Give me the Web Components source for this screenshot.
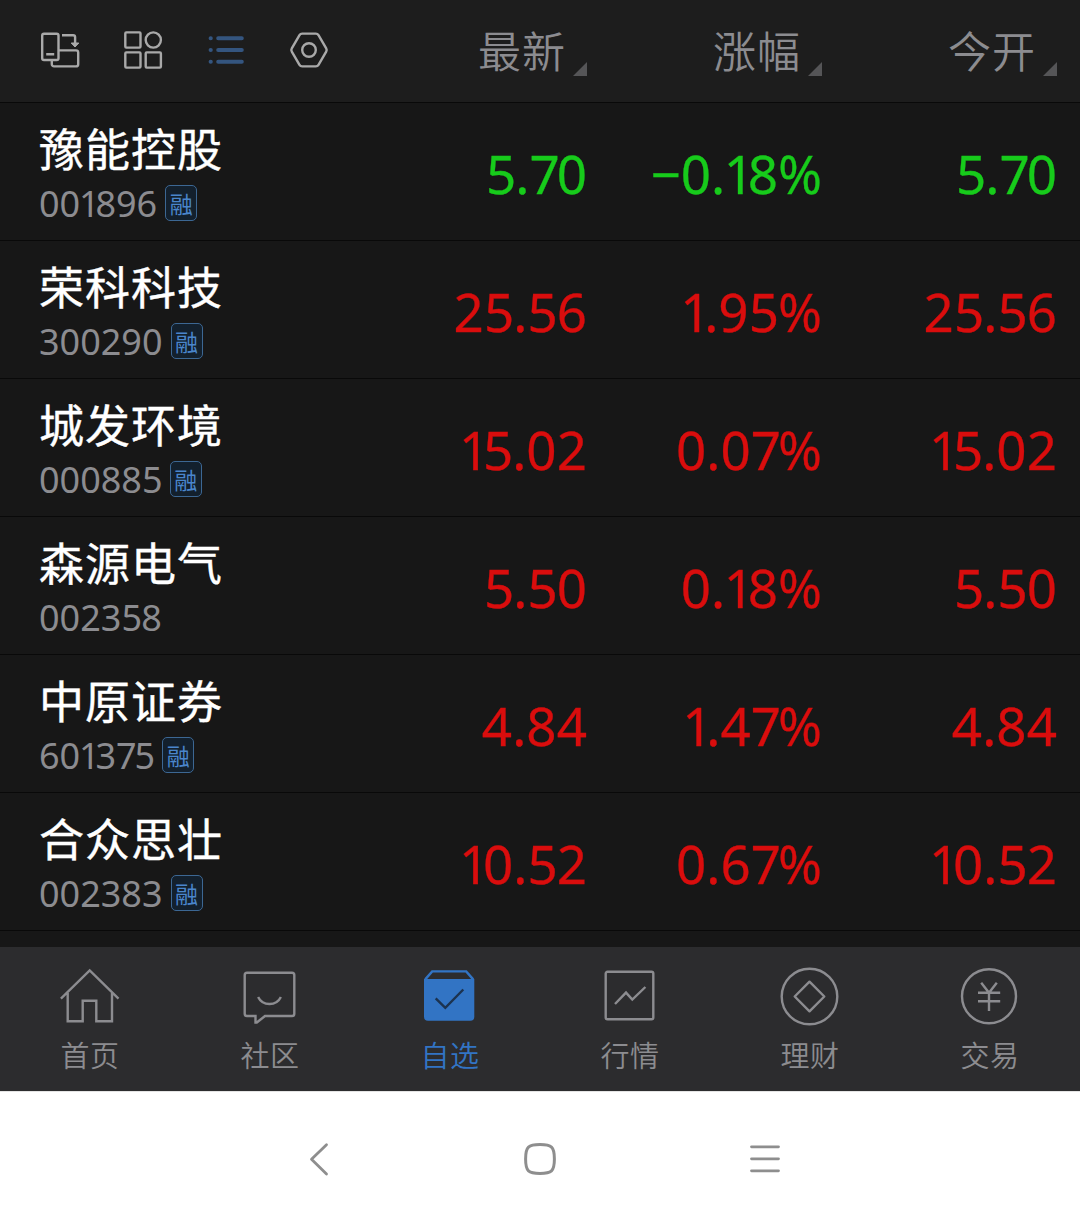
<!DOCTYPE html>
<html lang="zh-CN">
<head>
<meta charset="utf-8">
<title>自选</title>
<style>
    html, body {
        margin: 0;
        background: #171717;
    }

    body {
        width: 1080px;
        height: 1221px;
        overflow: hidden;
        font-family: "Noto Sans CJK SC", sans-serif;
        --font-num: "Noto Sans", "Noto Sans CJK SC", sans-serif;
        --color-up: #d90d0d;
        --color-down: #17cb1b;
        --color-muted: #8c8c90;
        --color-line: #090909;
        --color-accent: #3274c4;
        --columns: 387px 200px 235px 235px;
    }
</style>
</head>
<body>
<watch-app>
    <watch-header slot="header"></watch-header>
    <stock-row name="豫能控股" code="001896" margin price="5.70" change="−0.18%" open="5.70" trend="down"></stock-row>
    <stock-row name="荣科科技" code="300290" margin price="25.56" change="1.95%" open="25.56"></stock-row>
    <stock-row name="城发环境" code="000885" margin price="15.02" change="0.07%" open="15.02"></stock-row>
    <stock-row name="森源电气" code="002358" price="5.50" change="0.18%" open="5.50"></stock-row>
    <stock-row name="中原证券" code="601375" margin price="4.84" change="1.47%" open="4.84"></stock-row>
    <stock-row name="合众思壮" code="002383" margin price="10.52" change="0.67%" open="10.52"></stock-row>
    <nav-tab slot="tabs" icon="home">首页</nav-tab>
    <nav-tab slot="tabs" icon="chat">社区</nav-tab>
    <nav-tab slot="tabs" icon="pick" active>自选</nav-tab>
    <nav-tab slot="tabs" icon="chart">行情</nav-tab>
    <nav-tab slot="tabs" icon="coin">理财</nav-tab>
    <nav-tab slot="tabs" icon="yen">交易</nav-tab>
    <system-nav slot="system"></system-nav>
</watch-app>

<script>
const ICONS = {
    rotate: `
        <rect x="2.2" y="3.7" width="16.3" height="26.3" rx="1.8"/>
        <path d="M6.2 24.3h8M19 20.4h17a2.2 2.2 0 0 1 2.2 2.2v11.6a2.2 2.2 0 0 1-2.2 2.2H14a2.2 2.2 0 0 1-2.2-2.2V30M22 5.2h11.2a1.9 1.9 0 0 1 1.9 1.9V14"/>
        <path d="M31.2 13h7.6l-3.8 4z" fill="currentColor" stroke-width="1"/>`,
    grid: `
        <rect x="2.3" y="2.4" width="15.2" height="15.2" rx="1"/>
        <circle cx="30.3" cy="10" r="7.6"/>
        <rect x="2.3" y="22.4" width="15.2" height="15.2" rx="1"/>
        <rect x="22.7" y="22.4" width="15.2" height="15.2" rx="1"/>`,
    list: `
        <path d="M4.6 8.3h.2M4.6 20h.2M4.6 31.7h.2M12.2 8.3h23.6M12.2 20h23.6M12.2 31.7h23.6" stroke-width="4" stroke-linecap="round"/>`,
    settings: `
        <path d="M13.2 3.6h13.6a3.2 3.2 0 0 1 2.7 1.6l7.7 13.2a3.2 3.2 0 0 1 0 3.2l-7.7 13.2a3.2 3.2 0 0 1-2.7 1.6H13.2a3.2 3.2 0 0 1-2.7-1.6L2.8 21.6a3.2 3.2 0 0 1 0-3.2l7.7-13.2a3.2 3.2 0 0 1 2.7-1.6z"/>
        <circle cx="20" cy="20" r="6.8"/>`,
    home: `
        <path d="M.9 31.6 29.7 3.4l28.8 28.2M7.7 26v28.3h15V33.7h13.6v20.6H52V26"/>`,
    chat: `
        <path d="M7 5.7h45a2.3 2.3 0 0 1 2.3 2.3v38.7A2.3 2.3 0 0 1 52 49H25l-8.2 6.5H15.5V49H7a2.3 2.3 0 0 1-2.3-2.3V8A2.3 2.3 0 0 1 7 5.7z"/>
        <path d="M18.1 30c4.6 9.4 18.2 9.4 22.8 0"/>`,
    pick: `
        <path d="M4 12h50.3v37.7a4 4 0 0 1-4 4H8a4 4 0 0 1-4-4z" fill="currentColor" stroke="none"/>
        <path d="M5.2 12.4 12.2 4.4h34l7 8"/>
        <path d="M15.7 31.3 25.3 40.8 43.3 22.5" stroke="#1c3350"/>`,
    chart: `
        <rect x="5.7" y="4.7" width="47.6" height="47.6" rx="1.8"/>
        <path d="M15 37 26 25.6l6.3 7L45.4 20"/>`,
    coin: `
        <circle cx="29.5" cy="29.5" r="27.8"/>
        <path d="M29.5 14.7 44.3 29.5 29.5 44.3 14.7 29.5z" stroke-linejoin="round"/>`,
    yen: `
        <circle cx="29" cy="29.3" r="27"/>
        <path d="M21.2 15.8 29 25.8l7.8-10M29 25.8V44M18 25.8h22.2M18 34.2h22.2"/>`
};

function drawIcon(name, size) {
    return `<svg width="${size}" height="${size}" viewBox="0 0 ${size} ${size}" fill="none" stroke="currentColor" stroke-width="2.4">${ICONS[name]}</svg>`;
}

// Proportional spacing for the figures whose tabular width is too loose
function setDigits(text) {
    return text.replace(/[157]/g, (d) => `<span class="d${d}">${d}</span>`);
}

class WatchApp extends HTMLElement {
    constructor() {
        super();
        this.attachShadow({ mode: 'open' });
        this.shadowRoot.innerHTML = `
            <style>
                :host {
                    display: flex;
                    flex-direction: column;
                    height: 1221px;
                }

                .list {
                    flex: 1;
                    min-height: 0;
                    overflow: hidden;
                }

                .tabs {
                    display: grid;
                    grid-template-columns: repeat(6, 180px);
                    height: 144px;
                    background: #2c2c2e;
                }
            </style>
            <slot name="header"></slot>
            <div class="list"><slot></slot></div>
            <div class="tabs"><slot name="tabs"></slot></div>
            <slot name="system"></slot>
        `;
    }
}

class WatchHeader extends HTMLElement {
    constructor() {
        super();
        this.attachShadow({ mode: 'open' });
        this.shadowRoot.innerHTML = `
            <style>
                :host {
                    display: grid;
                    grid-template-columns: 392px 195px 235px 235px;
                    height: 102px;
                    background: #1d1d1d;
                    border-bottom: 1px solid var(--color-line);
                }

                .tools {
                    display: flex;
                    gap: 43px;
                    padding: 30px 0 0 40px;
                    color: #a9a9a9;
                }

                .tools svg {
                    display: block;
                }

                .selected {
                    color: #34557f;
                }
            </style>
            <div class="tools">
                <span>${drawIcon('rotate', 40)}</span>
                <span>${drawIcon('grid', 40)}</span>
                <span class="selected">${drawIcon('list', 40)}</span>
                <span>${drawIcon('settings', 40)}</span>
            </div>
            <sort-label>最新</sort-label>
            <sort-label>涨幅</sort-label>
            <sort-label>今开</sort-label>
        `;
    }
}

class SortLabel extends HTMLElement {
    constructor() {
        super();
        this.attachShadow({ mode: 'open' });
        this.shadowRoot.innerHTML = `
            <style>
                :host {
                    display: flex;
                    justify-content: flex-end;
                    align-items: flex-end;
                    height: 76px;
                    gap: 7px;
                    color: var(--color-muted);
                    font-size: 43px;
                    font-weight: 350;
                    line-height: 54px;
                    letter-spacing: 1px;
                }

                i {
                    width: 14px;
                    height: 14px;
                    background: #555557;
                    clip-path: polygon(100% 0, 100% 100%, 0 100%);
                }
            </style>
            <slot></slot><i></i>
        `;
    }
}

class StockRow extends HTMLElement {
    connectedCallback() {
        this.attachShadow({ mode: 'open' });
        this.render();
    }

    render() {
        const get = (key) => this.getAttribute(key);
        const tag = this.hasAttribute('margin') ? '<span class="tag">融</span>' : '';

        this.shadowRoot.innerHTML = `
            <style>
                :host {
                    display: grid;
                    grid-template-columns: var(--columns);
                    box-sizing: border-box;
                    height: 138px;
                    border-bottom: 1px solid var(--color-line);
                    color: var(--color-up);
                }

                :host([trend="down"]) {
                    color: var(--color-down);
                }

                .stock {
                    padding: 16px 0 0 39px;
                }

                .name {
                    color: #fff;
                    font-size: 45px;
                    line-height: 58px;
                    letter-spacing: 1px;
                    -webkit-text-stroke: .4px #fff;
                }

                .meta {
                    display: flex;
                    align-items: center;
                    gap: 8px;
                    height: 52px;
                    color: var(--color-muted);
                }

                .code {
                    font: 400 36px/50px var(--font-num);
                    padding-top: 2px;
                }

                .d1 {
                    margin-left: -.03em;
                    letter-spacing: -.12em;
                }

                .d5 {
                    letter-spacing: -.02em;
                }

                .d7 {
                    letter-spacing: -.06em;
                }

                .tag {
                    box-sizing: border-box;
                    width: 32px;
                    height: 36px;
                    border: 1px solid #3c6793;
                    border-radius: 5px;
                    background: #13202d;
                    color: #4a86cc;
                    font-size: 23px;
                    line-height: 34px;
                    text-align: center;
                }

                .num {
                    text-align: right;
                    font: 400 53px/142px var(--font-num);
                    height: 137px;
                    white-space: nowrap;
                    -webkit-text-stroke: .3px currentColor;
                }
            </style>
            <div class="stock">
                <div class="name">${get('name')}</div>
                <div class="meta"><span class="code">${setDigits(get('code'))}</span>${tag}</div>
            </div>
            <div class="num">${setDigits(get('price'))}</div>
            <div class="num">${setDigits(get('change'))}</div>
            <div class="num">${setDigits(get('open'))}</div>
        `;
    }
}

class NavTab extends HTMLElement {
    connectedCallback() {
        this.attachShadow({ mode: 'open' });
        this.shadowRoot.innerHTML = `
            <style>
                :host {
                    display: flex;
                    flex-direction: column;
                    align-items: center;
                    padding-top: 20px;
                    color: var(--color-muted);
                    font-size: 29px;
                    font-weight: 350;
                    line-height: 40px;
                    letter-spacing: .5px;
                }

                :host([active]) {
                    color: var(--color-accent);
                }

                svg {
                    display: block;
                    margin-bottom: 7px;
                }
            </style>
            ${drawIcon(this.getAttribute('icon'), 60)}
            <slot></slot>
        `;
    }
}

class SystemNav extends HTMLElement {
    constructor() {
        super();
        this.attachShadow({ mode: 'open' });
        this.shadowRoot.innerHTML = `
            <style>
                :host {
                    display: grid;
                    grid-template-columns: repeat(3, 225px);
                    justify-content: center;
                    justify-items: center;
                    box-sizing: border-box;
                    height: 130px;
                    padding-top: 48px;
                    background: #fff;
                    border-top: 1px solid #e4e4e4;
                }

                svg {
                    fill: none;
                    stroke: #8e8e8e;
                    stroke-width: 2.8;
                    stroke-linecap: round;
                    stroke-linejoin: round;
                }
            </style>
            <svg width="40" height="40"><path d="M31.5 4.8 16.5 19.2l15 14.8"/></svg>
            <svg width="40" height="40"><path d="M20 4.6c11.5 0 14.4 2 14.4 14.4S31.5 33.4 20 33.4 5.6 31.4 5.6 19 8.5 4.6 20 4.6z" stroke-width="3"/></svg>
            <svg width="40" height="40"><path d="M6.5 6.8h27M6.5 18.8h27M6.5 30.8h27"/></svg>
        `;
    }
}

customElements.define('watch-app', WatchApp);
customElements.define('watch-header', WatchHeader);
customElements.define('sort-label', SortLabel);
customElements.define('stock-row', StockRow);
customElements.define('nav-tab', NavTab);
customElements.define('system-nav', SystemNav);
</script>
</body>
</html>
